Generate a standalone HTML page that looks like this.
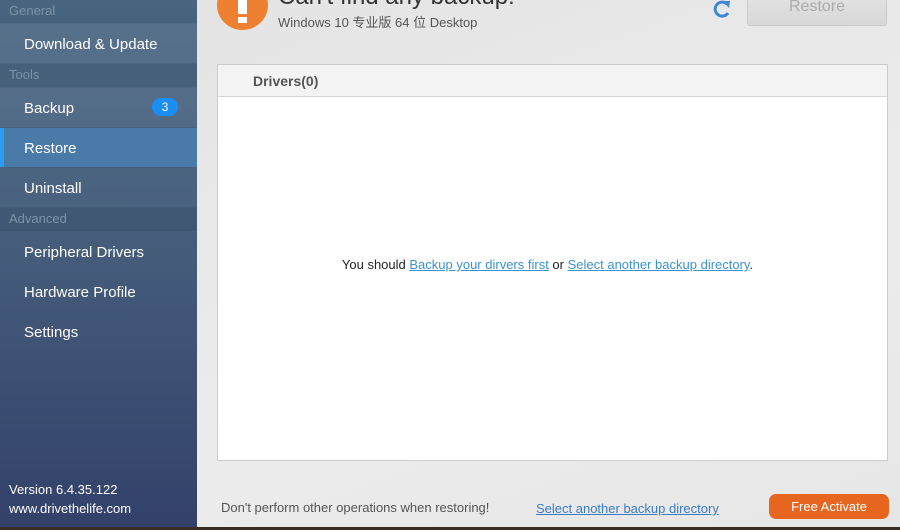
<!DOCTYPE html>
<html><head><meta charset="utf-8"><style>
*{margin:0;padding:0;box-sizing:border-box}
body{width:900px;height:530px;overflow:hidden;font-family:"Liberation Sans","Noto Sans CJK SC",sans-serif;background:#e8e8e8;position:relative}
#side{position:absolute;left:0;top:0;width:197px;height:527px;background:linear-gradient(#4e6b86,#445b7a 50%,#33416a)}
.hdr{position:absolute;left:0;width:197px;height:23px;color:#7c93a8;font-size:13px;padding-left:9px;line-height:22px;background:rgba(0,0,0,.06)}
.it{position:absolute;left:0;width:197px;height:39px;color:#fff;font-size:15px;padding-left:24px;line-height:41px;background:rgba(255,255,255,.05)}
.sel{background:#4a7aa8}
.sel:before{content:"";position:absolute;left:0;top:0;width:4px;height:39px;background:#2b9cf2}
.badge{position:absolute;left:152px;top:10px;width:26px;height:18px;border-radius:9px;background:#1a8ef5;color:#fff;font-size:12px;line-height:18px;text-align:center}
#main{position:absolute;left:197px;top:0;width:703px;height:527px;background:linear-gradient(160deg,#e4e4e4,#ececec 60%,#e6e6e6)}
.ft{position:absolute;color:#fff;font-size:13px;left:9px}
a{color:#3a93d0;text-decoration:underline}
</style></head><body>
<div id="side">
<div class="hdr" style="top:0">General</div>
<div class="it" style="top:24px">Download &amp; Update</div>
<div class="hdr" style="top:64px">Tools</div>
<div class="it" style="top:88px">Backup<span class="badge">3</span></div>
<div class="it sel" style="top:128px">Restore</div>
<div class="it" style="top:168px;background:rgba(255,255,255,.02)">Uninstall</div>
<div class="hdr" style="top:208px">Advanced</div>
<div class="it" style="top:232px;background:none">Peripheral Drivers</div>
<div class="it" style="top:272px;background:none">Hardware Profile</div>
<div class="it" style="top:312px;background:none">Settings</div>
<div class="ft" style="top:482px">Version 6.4.35.122</div>
<div class="ft" style="top:501px">www.drivethelife.com</div>
</div>
<div id="main">
<div style="position:absolute;left:20px;top:-20px;width:51px;height:50px;border-radius:50%;background:#ee8032"></div>
<div style="position:absolute;left:41px;top:-4px;width:9px;height:18px;background:#fff"></div>
<div style="position:absolute;left:41px;top:17px;width:9px;height:6px;background:#fff"></div>
<div style="position:absolute;left:81px;top:-17px;font-size:24px;color:#333">Can't find any backup!</div>
<div style="position:absolute;left:81px;top:12px;font-size:13px;color:#555">Windows 10 专业版 64 位 Desktop</div>
<svg style="position:absolute;left:514px;top:-2px" width="22" height="22" viewBox="0 0 22 22"><path d="M16 6A7 7 0 1 0 17 15" fill="none" stroke="#3f87d6" stroke-width="3"/><path d="M12 3L19 3L18 10Z" fill="#3f87d6"/></svg>
<div style="position:absolute;left:550px;top:-12px;width:140px;height:38px;border:1px solid #ccc;border-radius:3px;background:linear-gradient(#e4e4e4,#d8d8d8);color:#aaa;font-size:16px;text-align:center;line-height:32px;padding-top:2px">Restore</div>
<div style="position:absolute;left:20px;top:64px;width:671px;height:397px;border:1px solid #ccc;background:#fff">
<div style="height:32px;background:#f3f3f3;border-bottom:1px solid #d4d4d4;font-size:14px;font-weight:bold;color:#555;padding-left:35px;line-height:32px">Drivers(0)</div>
<div style="position:absolute;top:192px;width:100%;text-align:center;font-size:13px;color:#222;padding-right:10px">You should <a>Backup your dirvers first</a> or <a>Select another backup directory</a>.</div>
</div>
<div style="position:absolute;left:24px;top:500px;font-size:13px;color:#555">Don't perform other operations when restoring!</div>
<div style="position:absolute;left:339px;top:501px;font-size:13px;color:#3a7dc4;text-decoration:underline">Select another backup directory</div>
<div style="position:absolute;left:572px;top:494px;width:120px;height:25px;border-radius:7px;background:#e7661f;color:#fff;font-size:13px;text-align:center;line-height:25px">Free Activate</div>
</div>
<div style="position:absolute;left:0;top:527px;width:900px;height:3px;background:#3a2e22"></div>
</body></html>
